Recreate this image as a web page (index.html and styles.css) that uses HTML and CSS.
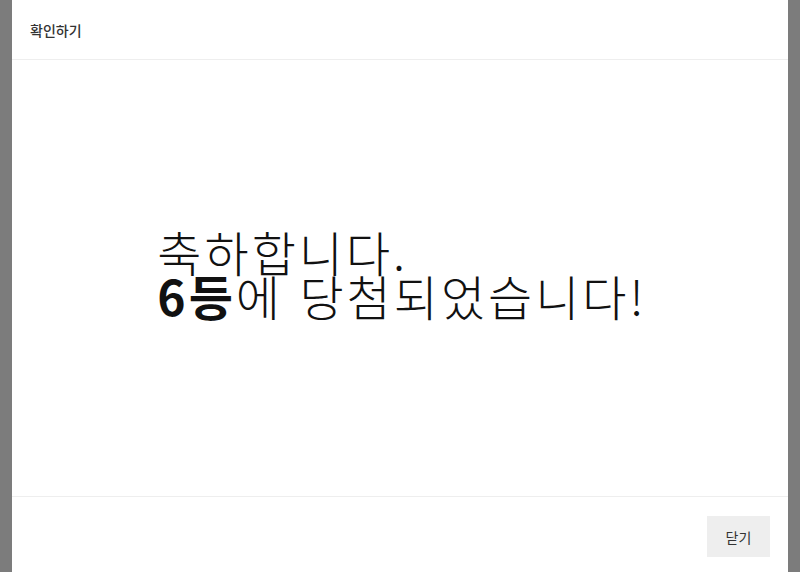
FILE: index.html
```html
<!DOCTYPE html>
<html lang="ko">
<head>
<meta charset="utf-8">
<link rel="stylesheet" href="styles.css">
</head>
<body>
<div class="overlay">
  <div class="modal">
    <div class="modal-header">확인하기</div>
    <div class="modal-body">
      <p class="message">축하합니다.<br><strong>6등</strong>에 당첨되었습니다!</p>
    </div>
    <div class="modal-footer">
      <button class="btn-close">닫기</button>
    </div>
  </div>
</div>
</body>
</html>
```
FILE: styles.css
```css
html, body {
  margin: 0;
  padding: 0;
  width: 800px;
  height: 572px;
  overflow: hidden;
  font-family: "Noto Sans CJK KR", "Noto Sans", sans-serif;
}
.overlay {
  width: 800px;
  height: 572px;
  background: #7c7c7c;
  display: flex;
  justify-content: center;
}
.modal {
  width: 776px;
  height: 572px;
  background: #fff;
  display: flex;
  flex-direction: column;
}
.modal-header {
  height: 60px;
  box-sizing: border-box;
  padding: 0 18px;
  display: flex;
  align-items: center;
  font-size: 14px;
  font-weight: 500;
  color: #333;
  border-bottom: 1px solid #eeeeee;
}
.modal-body {
  height: 436px;
  display: flex;
  align-items: center;
  justify-content: center;
  border-bottom: 1px solid #eeeeee;
}
.message {
  margin: 0;
  padding: 0 0 10px 4px;
  font-size: 48px;
  line-height: 44px;
  letter-spacing: 3px;
  font-weight: 300;
  color: #111;
}
.message strong {
  font-weight: 700;
}
.modal-footer {
  flex: 1;
  display: flex;
  justify-content: flex-end;
  align-items: flex-start;
  padding: 19px 18px 0 0;
}
.btn-close {
  width: 63px;
  height: 41px;
  border: none;
  background: #eeeeee;
  color: #333;
  font-family: "Noto Sans CJK KR", "Noto Sans", sans-serif;
  font-size: 14px;
  padding: 0;
}
```
